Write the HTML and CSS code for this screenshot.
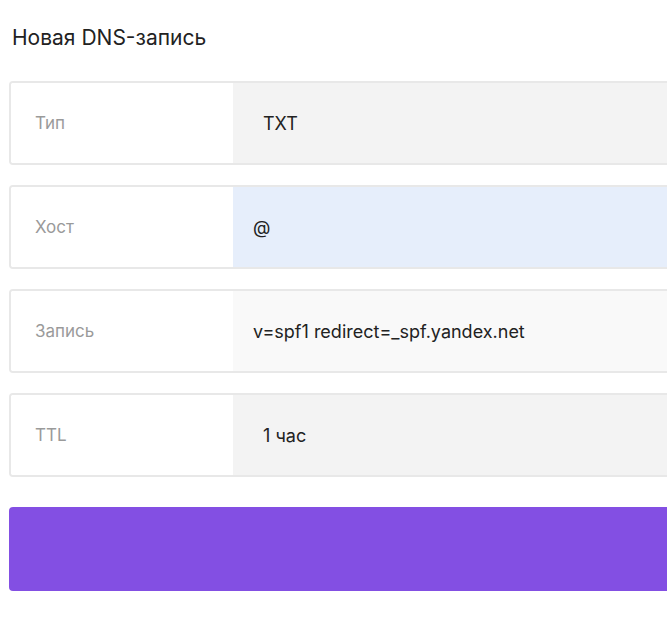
FILE: index.html
```html
<!DOCTYPE html>
<html lang="ru">
<head>
<meta charset="utf-8">
<link rel="stylesheet" href="styles.css">
</head>
<body>
<div class="page">
  <h1 class="title">Новая DNS-запись</h1>
  <div class="form">
    <div class="row">
      <div class="label">Тип</div>
      <div class="value value-select">TXT</div>
    </div>
    <div class="row">
      <div class="label">Хост</div>
      <div class="value value-input value-focus">@</div>
    </div>
    <div class="row">
      <div class="label">Запись</div>
      <div class="value value-input value-light">v=spf1 redirect=_spf.yandex.net</div>
    </div>
    <div class="row">
      <div class="label">TTL</div>
      <div class="value value-select">1 час</div>
    </div>
    <div class="button"></div>
  </div>
</div>
</body>
</html>
```
FILE: styles.css
```css
html, body {
  margin: 0;
  padding: 0;
  background: #fff;
}
body {
  font-family: Inter, "Noto Sans", sans-serif;
  color: #222;
}
.page {
  padding: 0 0 0 9px;
}
.title {
  margin: 0;
  padding: 25px 0 0 3px;
  height: 81px;
  box-sizing: border-box;
  font-size: 21px;
  font-weight: 400;
  line-height: 25px;
  color: #222;
}
.form {
  display: flex;
  flex-direction: column;
  gap: 20px;
}
.row {
  display: flex;
  height: 84px;
  box-sizing: border-box;
  border: 2px solid #e8e8e8;
  border-right: none;
  border-radius: 4px 0 0 4px;
  overflow: hidden;
}
.label {
  width: 222px;
  flex: none;
  display: flex;
  align-items: center;
  padding-left: 24px;
  box-sizing: border-box;
  font-size: 17px;
  color: #9a9a9a;
  background: #fff;
}
.value {
  flex: 1;
  display: flex;
  align-items: center;
  font-size: 18px;
  color: #222;
}
.value-select {
  background: #f3f3f3;
  padding-left: 30px;
}
.value-input {
  padding-left: 20px;
}
.value-focus {
  background: #e6eefb;
}
.value-light {
  background: #f9f9f9;
}
.button {
  margin-top: 10px;
  height: 84px;
  background: #834fe3;
  border-radius: 4px 0 0 4px;
}
```
